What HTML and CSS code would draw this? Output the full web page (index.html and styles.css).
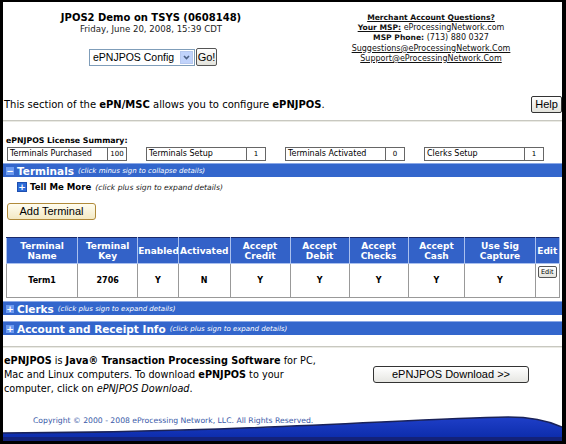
FILE: index.html
```html
<!DOCTYPE html>
<html>
<head>
<meta charset="utf-8">
<link rel="stylesheet" href="styles.css">
</head>
<body>
<div class="frame">
  <div class="header">
    <div class="hleft">
      <div class="title">JPOS2 Demo on TSYS (0608148)</div>
      <div class="date">Friday, June 20, 2008, 15:39 CDT</div>
      <div class="selrow">
        <div class="select"><span class="seltext">ePNJPOS Config</span><span class="arrow"><svg width="9" height="9" viewBox="0 0 9 9"><path d="M2 3 L4.5 5.5 L7 3" fill="none" stroke="#4d6185" stroke-width="1.6"/></svg></span></div>
        <div class="gobtn">Go!</div>
      </div>
    </div>
    <div class="hright">
      <div class="u b">Merchant Account Questions?</div>
      <div><span class="u b">Your MSP:</span> eProcessingNetwork.com</div>
      <div><span class="b">MSP Phone:</span> (713) 880 0327</div>
      <div class="u">Suggestions@eProcessingNetwork.Com</div>
      <div class="u">Support@eProcessingNetwork.Com</div>
    </div>
  </div>

  <div class="intro">
    <div class="introtext">This section of the <b>ePN/MSC</b> allows you to configure <b>ePNJPOS</b>.</div>
    <div class="helpbtn">Help</div>
  </div>
  <div class="rule"></div>

  <div class="sumlabel">ePNJPOS License Summary:</div>
  <div class="summary">
    <div class="sbox"><span class="sl">Terminals Purchased</span><span class="sv">100</span></div>
    <div class="sbox"><span class="sl">Terminals Setup</span><span class="sv">1</span></div>
    <div class="sbox"><span class="sl">Terminals Activated</span><span class="sv">0</span></div>
    <div class="sbox"><span class="sl">Clerks Setup</span><span class="sv">1</span></div>
  </div>

  <div class="bar bar-first"><span class="bicon">&minus;</span><span class="btitle">Terminals</span><span class="bhint">(click minus sign to collapse details)</span></div>
  <div class="tell"><span class="picon">+</span><span class="tt">Tell Me More</span><span class="bhint dark">(click plus sign to expand details)</span></div>
  <div class="addrow"><div class="addbtn">Add Terminal</div></div>

  <table class="term">
    <colgroup>
      <col class="c1"><col class="c2"><col class="c3"><col class="c4"><col class="c5"><col class="c6"><col class="c7"><col class="c8"><col class="c9"><col class="c10">
    </colgroup>
    <thead>
      <tr>
        <th>Terminal<br>Name</th>
        <th>Terminal<br>Key</th>
        <th>Enabled</th>
        <th>Activated</th>
        <th>Accept<br>Credit</th>
        <th>Accept<br>Debit</th>
        <th>Accept<br>Checks</th>
        <th>Accept<br>Cash</th>
        <th>Use Sig<br>Capture</th>
        <th>Edit</th>
      </tr>
    </thead>
    <tbody>
      <tr>
        <td>Term1</td><td>2706</td><td>Y</td><td>N</td><td>Y</td><td>Y</td><td>Y</td><td>Y</td><td>Y</td><td class="editcell"><span class="editbtn">Edit</span></td>
      </tr>
    </tbody>
  </table>

  <div class="bar bar-clerks"><span class="bicon">+</span><span class="btitle">Clerks</span><span class="bhint">(click plus sign to expand details)</span></div>
  <div class="bar bar-acct"><span class="bicon">+</span><span class="btitle">Account and Receipt Info</span><span class="bhint">(click plus sign to expand details)</span></div>
  <div class="rule rule2"></div>

  <div class="dl">
    <div class="dltext"><b>ePNJPOS</b> is <b>Java® Transaction Processing Software</b> for PC, Mac and Linux computers. To download <b>ePNJPOS</b> to your computer, click on <i>ePNJPOS Download</i>.</div>
    <div class="dlbtn">ePNJPOS Download &gt;&gt;</div>
  </div>

  <div class="footer">
    <svg class="wave" width="559" height="36" viewBox="0 0 559 36" preserveAspectRatio="none">
      <defs>
        <linearGradient id="g" x1="0" y1="0" x2="0" y2="1">
          <stop offset="0" stop-color="#1f3fc8"/>
          <stop offset="1" stop-color="#0a2aa8"/>
        </linearGradient>
      </defs>
      <path d="M0 28 C250 27 400 14 505 12 C530 12 548 17 559 22 L559 36 L0 36 Z" fill="url(#g)"/>
      <path d="M0 28 C250 27 400 14 505 12 C530 12 548 17 559 22" fill="none" stroke="#1a2258" stroke-width="1.5"/>
      <rect x="0" y="32" width="559" height="4" fill="#13227a"/>
    </svg>
    <div class="copy">Copyright © 2000 - 2008 eProcessing Network, LLC. All Rights Reserved.</div>
  </div>
</div>
</body>
</html>
```

FILE: styles.css
```css
html, body {
  margin: 0;
  padding: 0;
  background: #fff;
}
.frame {
  width: 566px;
  height: 444px;
  box-sizing: border-box;
  border-style: solid;
  border-color: #000;
  border-width: 2px 4px 3px 3px;
  background: #fff;
  font-family: "DejaVu Sans", Verdana, sans-serif;
  color: #000;
  position: relative;
  overflow: hidden;
}
.header {
  display: flex;
  padding-top: 10px;
}
.hleft {
  width: 296px;
  text-align: center;
}
.title {
  font-weight: bold;
  font-size: 10px;
  line-height: 12px;
}
.date {
  font-size: 8.6px;
  line-height: 10px;
  color: #222;
}
.selrow {
  display: flex;
  justify-content: center;
  align-items: center;
  margin-top: 14px;
  padding-left: 4px;
}
.select {
  flex: none;
  width: 104px;
  height: 15px;
  border: 1px solid #7f9db9;
  display: flex;
  align-items: center;
  justify-content: space-between;
  font-family: "Liberation Sans", Arial, sans-serif;
  font-size: 10.5px;
}
.seltext {
  padding-left: 3px;
}
.arrow {
  width: 13px;
  height: 13px;
  margin-right: 1px;
  background: #c1d3fb;
  border: 1px solid #b6c8ef;
  box-sizing: border-box;
  display: flex;
  align-items: center;
  justify-content: center;
}
.gobtn {
  flex: none;
  margin-left: 1px;
  width: 19px;
  height: 16px;
  border: 1px solid #555;
  border-radius: 2px;
  background: linear-gradient(#fff, #e3e3dc);
  font-family: "Liberation Sans", Arial, sans-serif;
  font-size: 11px;
  line-height: 16px;
  text-align: center;
}
.hright {
  width: 244px;
  margin-left: 10px;
  text-align: center;
  font-size: 8px;
  line-height: 10.2px;
  color: #111;
  padding-top: 1px;
}
.hright .b { font-size: 7.6px; }
.u { text-decoration: underline; }
.b { font-weight: bold; }

.intro {
  display: flex;
  justify-content: space-between;
  align-items: center;
  margin-top: 30px;
  padding-left: 1px;
}
.introtext {
  font-size: 10px;
  line-height: 12px;
}
.helpbtn {
  width: 29px;
  height: 15px;
  border: 1px solid #333;
  border-radius: 2px;
  background: linear-gradient(#fff, #e3e3dc);
  font-family: "Liberation Sans", Arial, sans-serif;
  font-size: 11px;
  line-height: 15px;
  text-align: center;
}
.rule {
  height: 1px;
  background: #c8c8c0;
  border-bottom: 1px solid #eaeae4;
  margin-top: 7px;
}
.sumlabel {
  font-size: 7.8px;
  font-weight: bold;
  margin-top: 14px;
  padding-left: 3px;
  line-height: 9px;
}
.summary {
  display: flex;
  gap: 19px;
  padding-left: 4px;
  margin-top: 2px;
}
.sbox {
  display: flex;
  width: 120px;
  height: 14px;
  box-sizing: border-box;
  border: 1px solid #666;
  font-size: 8px;
  line-height: 12px;
}
.sl {
  flex: 1;
  padding-left: 2px;
  border-right: 1px solid #666;
}
.sv {
  width: 18px;
  text-align: center;
  font-size: 7px;
}
.bar {
  height: 14px;
  background: #3366cc;
  border-top: 1px solid #8aa8e6;
  display: flex;
  align-items: center;
  color: #fff;
  margin-right: -1px;
  box-sizing: border-box;
}
.bar-first { margin-top: 2px; }
.bicon {
  width: 8px;
  height: 8px;
  background: #6b9af0;
  color: #fff;
  font-size: 9px;
  line-height: 8px;
  font-weight: bold;
  text-align: center;
  margin-left: 3px;
  margin-right: 3px;
}
.btitle {
  font-weight: bold;
  font-size: 10.5px;
  line-height: 12px;
}
.bhint {
  font-style: italic;
  font-size: 7px;
  margin-left: 4px;
  color: #fff;
}
.bhint.dark {
  color: #222;
  font-size: 7.6px;
}
.tell {
  display: flex;
  align-items: center;
  padding-left: 14px;
  margin-top: 5px;
  height: 10px;
}
.picon {
  width: 8px;
  height: 8px;
  background: #2d6cd8;
  border: 1px solid #1e4fb0;
  color: #fff;
  font-size: 9px;
  line-height: 8px;
  font-weight: bold;
  text-align: center;
  margin-right: 3px;
}
.tt {
  font-weight: bold;
  font-size: 8.6px;
}
.addrow {
  padding-left: 4px;
  margin-top: 11px;
}
.addbtn {
  width: 87px;
  height: 15px;
  border: 1px solid #b08a3a;
  border-radius: 3px;
  background: linear-gradient(#fffdf0, #f3e9c4);
  font-family: "Liberation Sans", Arial, sans-serif;
  font-size: 11px;
  line-height: 15px;
  text-align: center;
}
.term {
  margin-top: 17px;
  margin-left: 3px;
  width: 554px;
  border-collapse: collapse;
  border: 1px solid #1a2a6a;
  table-layout: fixed;
}
.term th {
  background: #3362c8;
  color: #fff;
  font-size: 9px;
  line-height: 10px;
  font-weight: bold;
  height: 25px;
  padding: 0;
  border: 1px solid #aac0ee;
  border-top-color: #1a2a6a;
  text-align: center;
  overflow: hidden;
}
.term td {
  height: 31px;
  font-size: 8px;
  font-weight: bold;
  text-align: center;
  border: 1px solid #999;
  padding: 0;
}
.c1 { width: 70px; }
.c2 { width: 59px; }
.c3 { width: 40px; }
.c4 { width: 51px; }
.c5 { width: 59px; }
.c6 { width: 58px; }
.c7 { width: 58px; }
.c8 { width: 56px; }
.c9 { width: 69px; }
.c10 { width: 24px; }
.term td.editcell {
  vertical-align: top;
  padding-top: 2px;
}
.editbtn {
  display: inline-block;
  border: 1px solid #555;
  border-radius: 2px;
  background: linear-gradient(#fff, #e3e3dc);
  font-size: 6.5px;
  font-weight: normal;
  line-height: 10px;
  padding: 0 2px;
}
.bar-clerks { margin-top: 3px; }
.bar-acct { margin-top: 6px; }
.rule2 { margin-top: 11px; }
.dl {
  display: flex;
  align-items: flex-start;
  margin-top: 6px;
  padding-left: 1px;
}
.dltext {
  width: 318px;
  font-size: 9.7px;
  line-height: 14px;
}
.dlbtn {
  margin-left: 51px;
  margin-top: 12px;
  width: 154px;
  height: 15px;
  border: 1px solid #333;
  border-radius: 3px;
  background: linear-gradient(#fff, #e6e6e2);
  font-family: "Liberation Sans", Arial, sans-serif;
  font-size: 11px;
  line-height: 15px;
  text-align: center;
}
.footer {
  position: absolute;
  left: 0;
  right: 0;
  bottom: 0;
  height: 36px;
}
.wave {
  position: absolute;
  left: 0;
  bottom: 0;
  display: block;
}
.copy {
  position: absolute;
  left: 30px;
  top: 11px;
  font-size: 7.7px;
  color: #3a5aa8;
}
```
